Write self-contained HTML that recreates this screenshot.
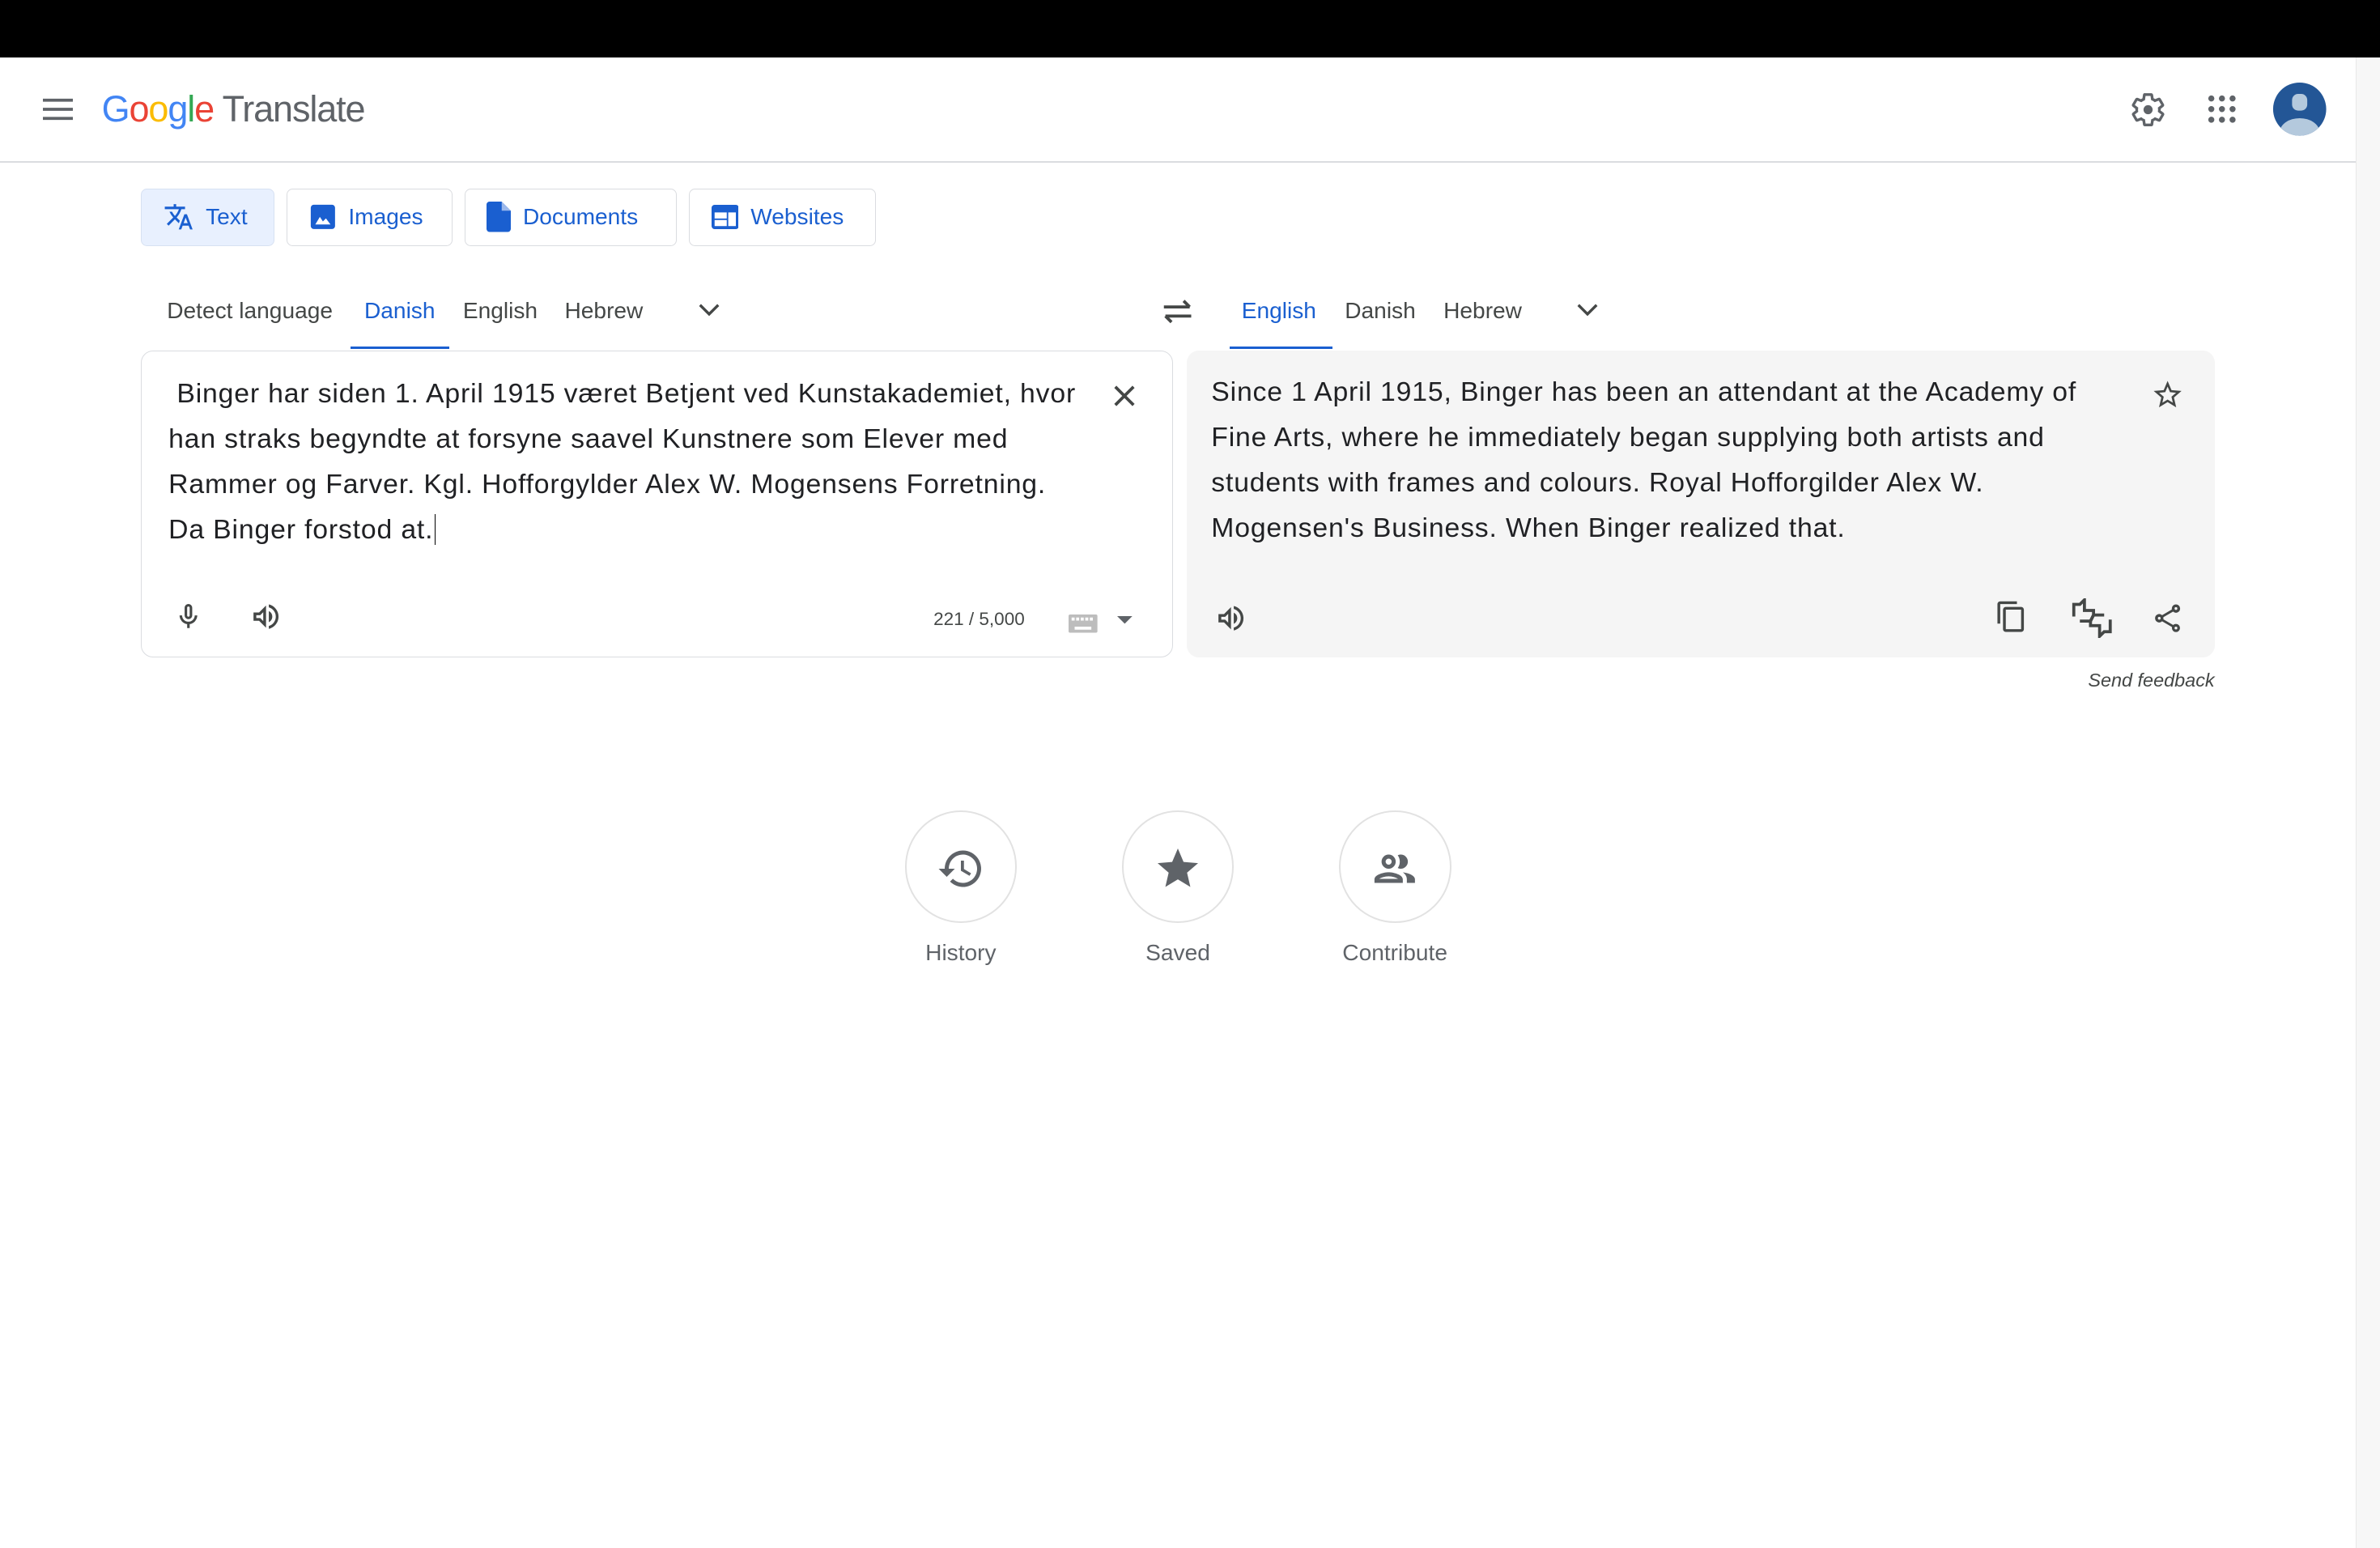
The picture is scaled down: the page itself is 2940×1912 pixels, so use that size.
<!DOCTYPE html>
<html><head><meta charset="utf-8"><style>
html,body{margin:0;padding:0;width:2940px;height:1912px;overflow:hidden;background:#fff}
#w{zoom:1.875;width:1568px;height:1020px;position:relative;font-family:"Liberation Sans",Arial,sans-serif;color:#3c4043}
.a{position:absolute}
.btn{position:absolute;top:124px;border:1px solid #dadce0;border-radius:4px;box-sizing:border-box;height:38px;color:#1a5fd0;font-size:15px;display:flex;align-items:center;padding-left:14px}
.btn svg{margin-right:8px}
.tab{position:absolute;top:196px;font-size:15px;color:#444746}
.ic{position:absolute}
.lbl{position:absolute;top:619px;font-size:15px;color:#5f6368;transform:translateX(-50%)}
.circ{position:absolute;top:534px;width:74px;height:74px;border:1.5px solid #e2e2e2;border-radius:50%;box-sizing:border-box}
.tx{position:absolute;font-size:18px;letter-spacing:0.45px;line-height:30px;color:#202124;white-space:nowrap}
</style></head><body><div id="w">
<div class="a" style="left:0;top:0;width:1568px;height:38px;background:#000"></div>
<div class="a" style="left:1552px;top:38px;width:16px;height:982px;background:#f7f7f7;border-left:1px solid #e8e8e8"></div>
<div class="a" style="left:0;top:106px;width:1552px;height:1px;background:#dadce0"></div>
<svg class="ic" style="left:28px;top:64px" width="20" height="16"><rect y="1" width="20" height="2" fill="#5f6368"/><rect y="7" width="20" height="2" fill="#5f6368"/><rect y="13" width="20" height="2" fill="#5f6368"/></svg>
<div class="a" style="left:67px;top:58px;font-size:24px;letter-spacing:-0.6px"><span style="color:#4285f4">G</span><span style="color:#ea4335">o</span><span style="color:#fbbc05">o</span><span style="color:#4285f4">g</span><span style="color:#34a853">l</span><span style="color:#ea4335">e</span> <span style="color:#5f6368">Translate</span></div>
<svg class="ic" style="left:1403px;top:60px" width="24" height="24" viewBox="0 0 24 24"><path fill="none" stroke="#5f6368" stroke-width="1.8" d="M19.4 13c.04-.3.06-.66.06-1s-.02-.7-.06-1l2.1-1.65a.5.5 0 0 0 .12-.64l-2-3.46a.5.5 0 0 0-.6-.22l-2.5 1a7.3 7.3 0 0 0-1.7-1l-.38-2.65A.49.49 0 0 0 14 2h-4a.49.49 0 0 0-.49.42l-.38 2.65c-.6.25-1.17.6-1.7 1l-2.5-1a.5.5 0 0 0-.6.22l-2 3.46a.5.5 0 0 0 .12.64L4.57 11c-.04.3-.07.67-.07 1s.03.7.07 1l-2.1 1.65a.5.5 0 0 0-.12.64l2 3.46c.12.22.38.3.6.22l2.5-1c.52.4 1.08.74 1.7 1l.38 2.65c.04.24.25.42.49.42h4c.25 0 .45-.18.49-.42l.38-2.65c.6-.25 1.17-.6 1.7-1l2.5 1c.22.08.48 0 .6-.22l2-3.46a.5.5 0 0 0-.12-.64z"/><circle cx="12" cy="12" r="3" fill="#5f6368"/></svg>
<svg class="ic" style="left:1454px;top:62px" width="20" height="20"><g fill="#5f6368"><circle cx="3" cy="3" r="2"/><circle cx="10" cy="3" r="2"/><circle cx="17" cy="3" r="2"/><circle cx="3" cy="10" r="2"/><circle cx="10" cy="10" r="2"/><circle cx="17" cy="10" r="2"/><circle cx="3" cy="17" r="2"/><circle cx="10" cy="17" r="2"/><circle cx="17" cy="17" r="2"/></g></svg>
<svg class="ic" style="left:1497px;top:54px" width="36" height="36"><defs><clipPath id="c"><circle cx="18" cy="18" r="17.5"/></clipPath></defs><circle cx="18" cy="18" r="17.5" fill="#235696"/><g clip-path="url(#c)" fill="#b4c9dd"><rect x="13" y="8" width="10" height="11" rx="4"/><ellipse cx="18" cy="33" rx="13" ry="9"/></g></svg>

<div class="btn" style="left:93px;width:88px;background:#e8f0fe;border-color:#d7e1f2"><svg width="20" height="20" viewBox="0 0 24 24"><path fill="#1a5fd0" d="M12.87 15.07l-2.54-2.51.03-.03A17.5 17.5 0 0 0 14.07 6H17V4h-7V2H8v2H1v2h11.17A15.8 15.8 0 0 1 9 11.35 15.6 15.6 0 0 1 6.69 8h-2a17.6 17.6 0 0 0 2.98 4.56l-5.09 5.02L4 19l5-5 3.11 3.11zM18.5 10h-2L12 22h2l1.12-3h4.75L21 22h2zm-2.62 7l1.62-4.33L19.12 17z"/></svg>Text</div>
<div class="btn" style="left:189px;width:109px"><svg width="18" height="18" viewBox="0 0 18 18"><rect x="1" y="1" width="16" height="16" rx="2" fill="#1a5fd0"/><path d="M4 14l3-5 2 3 2-2 3 4z" fill="#fff"/></svg>Images</div>
<div class="btn" style="left:306px;width:140px"><svg width="16" height="20" viewBox="0 0 16 20"><path d="M2 0h8l6 6v12a2 2 0 0 1-2 2H2a2 2 0 0 1-2-2V2a2 2 0 0 1 2-2z" fill="#1a5fd0"/><path d="M10 0v6h6" fill="#9bb8ec"/></svg>Documents</div>
<div class="btn" style="left:454px;width:123px"><svg width="18" height="16" viewBox="0 0 18 16"><rect x="0" y="0" width="18" height="16" rx="2" fill="#1a5fd0"/><rect x="2" y="5" width="8" height="4" fill="#fff"/><rect x="2" y="10" width="8" height="4" fill="#fff"/><rect x="11" y="5" width="5" height="9" fill="#fff"/></svg>Websites</div>

<div class="tab" style="left:110px">Detect language</div>
<div class="tab" style="left:240px;color:#1a5fd0">Danish</div>
<div class="a" style="left:231px;top:228px;width:65px;height:2px;background:#1a5fd0"></div>
<div class="tab" style="left:305px">English</div>
<div class="tab" style="left:372px">Hebrew</div>
<svg class="ic" style="left:459px;top:199px" width="16" height="12"><path d="M2 2l6 6 6-6" stroke="#444746" stroke-width="1.8" fill="none"/></svg>
<svg class="ic" style="left:765px;top:195px" width="22" height="20" viewBox="0 0 22 20"><path d="M2 7h17M15 3l4 4M20 13H3M7 17l-4-4" stroke="#444746" stroke-width="2" fill="none"/></svg>
<div class="tab" style="left:818px;color:#1a5fd0">English</div>
<div class="a" style="left:810px;top:228px;width:68px;height:2px;background:#1a5fd0"></div>
<div class="tab" style="left:886px">Danish</div>
<div class="tab" style="left:951px">Hebrew</div>
<svg class="ic" style="left:1038px;top:199px" width="16" height="12"><path d="M2 2l6 6 6-6" stroke="#444746" stroke-width="1.8" fill="none"/></svg>

<div class="a" style="left:93px;top:231px;width:680px;height:202px;border:1px solid #dadce0;border-radius:8px;box-sizing:border-box"></div>
<div class="tx" style="left:111px;top:244px">&nbsp;Binger har siden 1. April 1915 været Betjent ved Kunstakademiet, hvor<br>han straks begyndte at forsyne saavel Kunstnere som Elever med<br>Rammer og Farver. Kgl. Hofforgylder Alex W. Mogensens Forretning.<br>Da Binger forstod at.<span style="border-left:1px solid #000;margin-left:1px"></span></div>
<svg class="ic" style="left:733px;top:253px" width="16" height="16"><path d="M2 2l12 12M14 2L2 14" stroke="#444746" stroke-width="2"/></svg>
<svg class="ic" style="left:114px;top:395px" width="20" height="22" viewBox="0 0 24 24"><path fill="#444746" d="M12 14a3 3 0 0 0 3-3V5a3 3 0 0 0-6 0v6a3 3 0 0 0 3 3zm-1-9a1 1 0 0 1 2 0v6a1 1 0 0 1-2 0zm6 6a5 5 0 0 1-10 0H5a7 7 0 0 0 6 6.92V21h2v-3.08A7 7 0 0 0 19 11z"/></svg>
<svg class="ic" style="left:164px;top:395px" width="22" height="22" viewBox="0 0 24 24"><path fill="#444746" d="M3 9v6h4l5 5V4L7 9zm7-.17v6.34L7.83 13H5v-2h2.83zM16.5 12A4.5 4.5 0 0 0 14 7.97v8.05c1.48-.73 2.5-2.25 2.5-4.02zM14 3.23v2.06a7 7 0 0 1 0 13.42v2.06A9 9 0 0 0 14 3.23z"/></svg>
<div class="a" style="left:615px;top:401px;font-size:12px;color:#444746">221 / 5,000</div>
<svg class="ic" style="left:704px;top:405px" width="19" height="12"><rect width="19" height="12" rx="1" fill="#bdbdbd"/><g fill="#fff"><rect x="2" y="2" width="2" height="2"/><rect x="5" y="2" width="2" height="2"/><rect x="8" y="2" width="2" height="2"/><rect x="11" y="2" width="2" height="2"/><rect x="14" y="2" width="2" height="2"/><rect x="4" y="8" width="11" height="2"/></g></svg>
<svg class="ic" style="left:736px;top:406px" width="10" height="6"><path d="M0 0h10L5 5z" fill="#5f6368"/></svg>

<div class="a" style="left:782px;top:231px;width:677px;height:202px;background:#f5f5f5;border-radius:8px"></div>
<div class="tx" style="left:798px;top:243px">Since 1 April 1915, Binger has been an attendant at the Academy of<br>Fine Arts, where he immediately began supplying both artists and<br>students with frames and colours. Royal Hofforgilder Alex W.<br>Mogensen's Business. When Binger realized that.</div>
<svg class="ic" style="left:1417px;top:249px" width="22" height="22" viewBox="0 0 24 24"><path fill="#444746" d="M22 9.24l-7.19-.62L12 2 9.19 8.63 2 9.24l5.46 4.73L5.82 21 12 17.27 18.18 21l-1.63-7.03zM12 15.4l-3.76 2.27 1-4.28-3.32-2.88 4.38-.38L12 6.1l1.71 4.04 4.38.38-3.32 2.88 1 4.28z"/></svg>
<svg class="ic" style="left:800px;top:396px" width="22" height="22" viewBox="0 0 24 24"><path fill="#444746" d="M3 9v6h4l5 5V4L7 9zm7-.17v6.34L7.83 13H5v-2h2.83zM16.5 12A4.5 4.5 0 0 0 14 7.97v8.05c1.48-.73 2.5-2.25 2.5-4.02zM14 3.23v2.06a7 7 0 0 1 0 13.42v2.06A9 9 0 0 0 14 3.23z"/></svg>
<svg class="ic" style="left:1314px;top:395px" width="22" height="22" viewBox="0 0 24 24"><path fill="#444746" d="M16 1H4a2 2 0 0 0-2 2v14h2V3h12zm3 4H8a2 2 0 0 0-2 2v14a2 2 0 0 0 2 2h11a2 2 0 0 0 2-2V7a2 2 0 0 0-2-2zm0 16H8V7h11z"/></svg>
<svg class="ic" style="left:1364px;top:394px" width="28" height="26" viewBox="0 0 28 26"><path d="M2 12V4h4l3-3v7h6v3l-2 4H6" stroke="#444746" stroke-width="2" fill="none"/><path d="M26 14v8h-4l-3 3v-7h-6v-3l2-4h7" stroke="#444746" stroke-width="2" fill="none"/></svg>
<svg class="ic" style="left:1417px;top:396px" width="22" height="22" viewBox="0 0 24 24"><path fill="#444746" d="M18 16.08c-.76 0-1.44.3-1.96.77L8.91 12.7c.05-.23.09-.46.09-.7s-.04-.47-.09-.7l7.05-4.11A2.99 2.99 0 0 0 21 5a3 3 0 0 0-6 0c0 .24.04.47.09.7L8.04 9.81A2.99 2.99 0 0 0 3 12a3 3 0 0 0 5.04 2.19l7.12 4.16c-.05.21-.08.43-.08.65A2.92 2.92 0 1 0 18 16.08zM18 4a1 1 0 1 1 0 2 1 1 0 0 1 0-2zM6 13a1 1 0 1 1 0-2 1 1 0 0 1 0 2zm12 7.02a1 1 0 1 1 0-2 1 1 0 0 1 0 2z"/></svg>
<div class="a" style="left:1300px;width:159px;text-align:right;top:441px;font-size:12.5px;font-style:italic;color:#444746">Send feedback</div>

<div class="circ" style="left:596px"></div>
<div class="circ" style="left:739px"></div>
<div class="circ" style="left:882px"></div>
<svg class="ic" style="left:617px;top:556px" width="32" height="32" viewBox="0 0 24 24"><path fill="#5f6368" d="M13 3a9 9 0 0 0-9 9H1l3.89 3.89.07.14L9 12H6a7 7 0 1 1 2.05 4.95l-1.42 1.42A9 9 0 1 0 13 3zm-1 5v5l4.25 2.52.77-1.28-3.52-2.09V8z"/></svg>
<svg class="ic" style="left:760px;top:556px" width="32" height="32" viewBox="0 0 24 24"><path fill="#5f6368" d="M12 17.27L18.18 21l-1.64-7.03L22 9.24l-7.19-.61L12 2 9.19 8.63 2 9.24l5.46 4.73L5.82 21z"/></svg>
<svg class="ic" style="left:902px;top:556px" width="34" height="32" viewBox="0 0 24 24"><path fill="#5f6368" d="M9 13.75c-2.34 0-7 1.17-7 3.5V19h14v-1.75c0-2.33-4.66-3.5-7-3.5zM4.34 17c.84-.58 2.87-1.25 4.66-1.25s3.82.67 4.66 1.25zM9 12a3.5 3.5 0 1 0 0-7 3.5 3.5 0 0 0 0 7zm0-5a1.5 1.5 0 1 1 0 3 1.5 1.5 0 0 1 0-3zm7.04 6.81c1.16.84 1.96 1.96 1.96 3.44V19h4v-1.75c0-2.02-3.5-3.17-5.96-3.44zM15 12a3.5 3.5 0 0 0 0-7c-.54 0-1.04.13-1.5.35a5.4 5.4 0 0 1 0 6.3c.46.22.96.35 1.5.35z"/></svg>
<div class="lbl" style="left:633px">History</div>
<div class="lbl" style="left:776px">Saved</div>
<div class="lbl" style="left:919px">Contribute</div>
</div></body></html>
